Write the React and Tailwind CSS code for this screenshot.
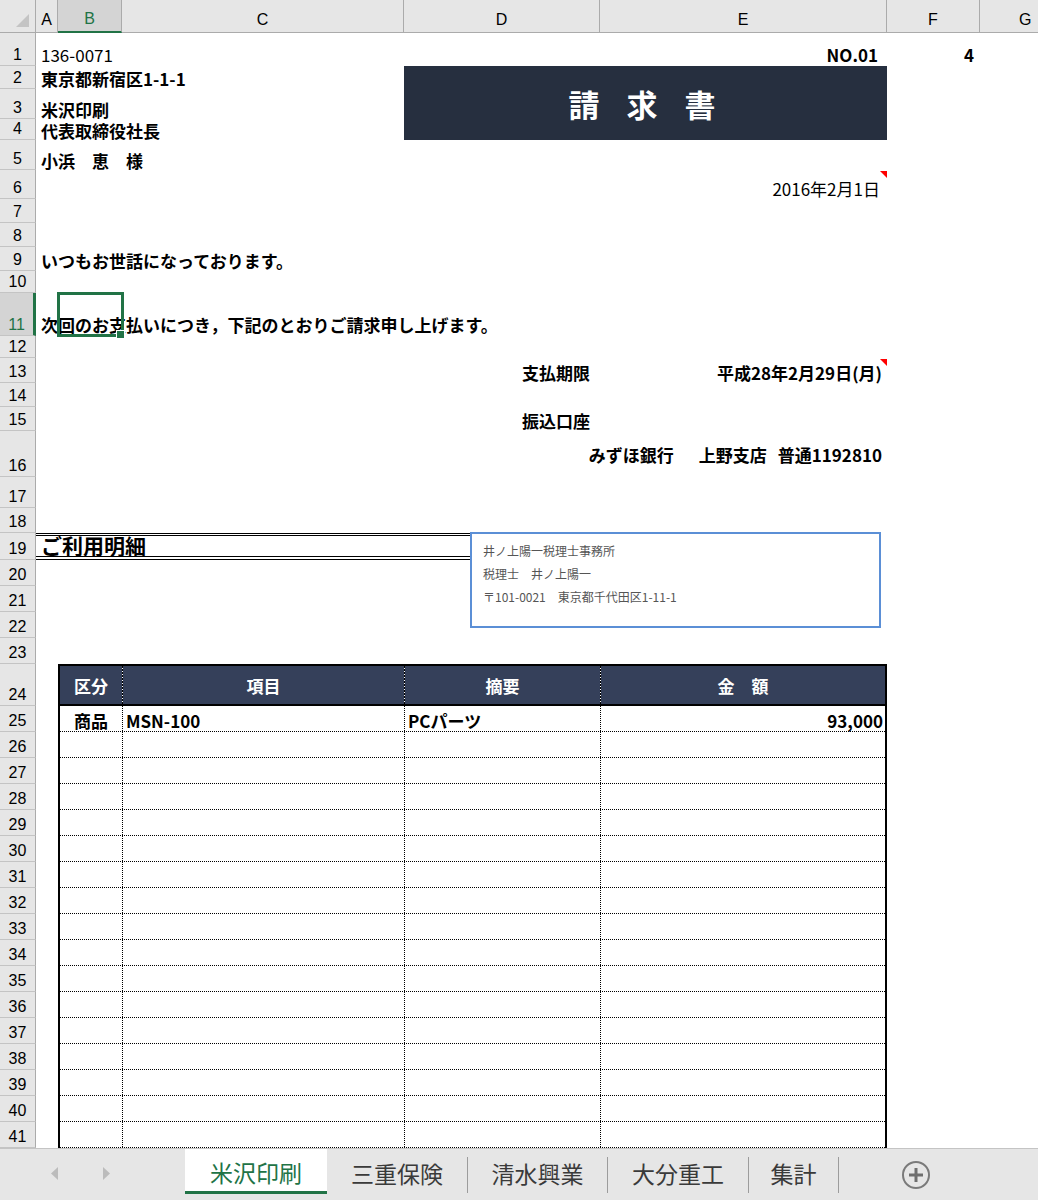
import React from "react";

const JP = "font-['Noto_Sans_CJK_JP',sans-serif]";
const HEAD = "font-['Liberation_Sans','Noto_Sans_CJK_JP',sans-serif]";

const rowNums = Array.from({ length: 41 }, (_, i) => i + 1);
const bodyRows = Array.from({ length: 16 }, (_, i) => i);

const Corner = ({ className }) => (
  <svg width="7" height="7" className={className}>
    <polygon points="0,0 7,0 7,7" fill="#ff0000" />
  </svg>
);

export default function App() {
  return (
    <div className={`w-[1038px] h-[1200px] overflow-hidden bg-white flex flex-col text-black ${JP}`}>
      {/* sheet */}
      <div className="relative h-[1148px] shrink-0 overflow-hidden grid grid-cols-[36px_22px_64px_282px_196px_287px_93px_58px] grid-rows-[33px_33px_23px_30px_21px_30px_29px_24px_24px_24px_22px_43px_22px_25px_24px_24px_46px_31px_25px_27px_26px_26px_26px_26px_42px_repeat(17,26px)] text-[17px] leading-[17px] font-bold">
        {/* column headers */}
        <div className="col-start-1 row-start-1 bg-[#e6e6e6] border-r border-b border-[#ababab] flex items-end justify-end pr-[6px] pb-[5px]">
          <svg width="13" height="13">
            <polygon points="13,0 13,13 0,13" fill="#c4c4c4" />
          </svg>
        </div>
        <div className={`col-start-2 row-start-1 bg-[#e6e6e6] border-r border-b border-[#ababab] flex items-center justify-center pt-[6px] text-[16px] font-normal ${HEAD}`}>A</div>
        <div className={`col-start-3 row-start-1 bg-[#d4d4d4] border-r border-[#ababab] border-b-2 border-b-[#217346] flex items-center justify-center pt-[6px] text-[16px] font-normal text-[#217346] ${HEAD}`}>B</div>
        <div className={`col-start-4 row-start-1 bg-[#e6e6e6] border-r border-b border-[#ababab] flex items-center justify-center pt-[6px] text-[16px] font-normal ${HEAD}`}>C</div>
        <div className={`col-start-5 row-start-1 bg-[#e6e6e6] border-r border-b border-[#ababab] flex items-center justify-center pt-[6px] text-[16px] font-normal ${HEAD}`}>D</div>
        <div className={`col-start-6 row-start-1 bg-[#e6e6e6] border-r border-b border-[#ababab] flex items-center justify-center pt-[6px] text-[16px] font-normal ${HEAD}`}>E</div>
        <div className={`col-start-7 row-start-1 bg-[#e6e6e6] border-r border-b border-[#ababab] flex items-center justify-center pt-[6px] text-[16px] font-normal ${HEAD}`}>F</div>
        <div className={`col-start-8 row-start-1 bg-[#e6e6e6] border-b border-[#ababab] flex items-center pl-[39px] pt-[6px] text-[16px] font-normal ${HEAD}`}>G</div>

        {/* row headers */}
        {rowNums.map((n) => (
          <div
            key={n}
            style={{ gridRow: n + 1 }}
            className={`col-start-1 flex items-end justify-center pb-[2px] leading-[16px] text-[16px] font-normal border-b border-[#c4c4c4] ${HEAD} ${
              n === 11
                ? "bg-[#d4d4d4] text-[#217346] border-r-[3px] border-r-[#217346]"
                : "bg-[#e6e6e6] border-r border-r-[#ababab]"
            }`}
          >
            {n}
          </div>
        ))}

        {/* address block */}
        <div className="col-start-2 col-span-4 row-start-2 flex items-end pl-[5px] pb-[3px] whitespace-nowrap font-normal">136-0071</div>
        <div className="col-start-6 row-start-2 flex items-end justify-end pr-[9px] pb-[3px]">NO.01</div>
        <div className="col-start-7 row-start-2 flex items-end justify-end pr-[6px] pb-[3px]">4</div>
        <div className="col-start-2 col-span-4 row-start-3 flex items-end pl-[5px] pb-[2px] whitespace-nowrap">東京都新宿区1-1-1</div>
        <div className="col-start-2 col-span-4 row-start-4 flex items-end pl-[5px] pb-[1px] whitespace-nowrap">米沢印刷</div>
        <div className="col-start-2 col-span-4 row-start-5 flex items-end pl-[5px] pb-[1px] whitespace-nowrap">代表取締役社長</div>
        <div className="col-start-2 col-span-4 row-start-6 flex items-end pl-[5px] pb-[1px] whitespace-nowrap">小浜　恵　様</div>

        {/* title banner */}
        <div className="col-start-5 col-span-2 row-start-3 row-span-3 bg-[#262f3f] flex items-center justify-center pl-[20px] text-white text-[31px] leading-[31px] tracking-[27px]">
          請求書
        </div>

        <div className="col-start-6 row-start-7 flex items-end justify-end pr-[7px] pb-[2px] whitespace-nowrap font-normal">2016年2月1日</div>

        <div className="col-start-2 col-span-6 row-start-10 flex items-end pl-[5px] pb-[2px] whitespace-nowrap">いつもお世話になっております。</div>
        <div className="col-start-2 col-span-6 row-start-12 flex items-end pl-[5px] pb-[3px] whitespace-nowrap">次回のお支払いにつき，下記のとおりご請求申し上げます。</div>

        {/* payment */}
        <div className="col-start-5 row-start-14 flex items-end pl-[118px] pb-[2px] whitespace-nowrap">支払期限</div>
        <div className="col-start-6 row-start-14 flex items-end justify-end pr-[5px] pb-[2px] whitespace-nowrap">平成28年2月29日(月)</div>
        <div className="col-start-5 row-start-16 flex items-end pl-[118px] pb-[2px] whitespace-nowrap">振込口座</div>
        <div className="col-start-5 col-span-2 row-start-17 flex items-center justify-end pr-[5px] whitespace-nowrap">
          <span>みずほ銀行</span>
          <span className="w-[25px]" />
          <span>上野支店</span>
          <span className="w-[11px]" />
          <span>普通1192810</span>
        </div>

        {/* section heading */}
        <div className="col-start-2 col-span-4 row-start-20 border-t-[3px] border-b-[4px] border-double border-black flex items-end pl-[5px] pb-[1px] leading-[20px] text-[21px] whitespace-nowrap">
          ご利用明細
        </div>

        {/* detail table */}
        <div className="col-start-3 col-span-4 row-start-25 row-span-18 border-x-2 border-t-2 border-black flex flex-col">
          <div className="h-[40px] shrink-0 grid grid-cols-[62px_1px_281px_1px_195px_1px_1fr] bg-[#35405a] border-b-2 border-black text-white">
            <div className="flex items-center justify-center">区分</div>
            <div className="bg-[repeating-linear-gradient(to_bottom,#000_0_2px,#fff_2px_3px)]" />
            <div className="flex items-center justify-center">項目</div>
            <div className="bg-[repeating-linear-gradient(to_bottom,#000_0_2px,#fff_2px_3px)]" />
            <div className="flex items-center justify-center">摘要</div>
            <div className="bg-[repeating-linear-gradient(to_bottom,#000_0_2px,#fff_2px_3px)]" />
            <div className="flex items-center justify-center">金　額</div>
          </div>
          <div className="h-[26px] shrink-0 grid grid-cols-[62px_282px_196px_1fr] border-b border-dotted border-black">
            <div className="flex items-end justify-center pb-[2px]">商品</div>
            <div className="flex items-end pl-[3px] pb-[2px] border-l border-dotted border-black">MSN-100</div>
            <div className="flex items-end pl-[3px] pb-[2px] border-l border-dotted border-black">PCパーツ</div>
            <div className="flex items-end justify-end pr-[2px] pb-[2px] border-l border-dotted border-black">93,000</div>
          </div>
          {bodyRows.map((r) => (
            <div key={r} className="h-[26px] shrink-0 grid grid-cols-[62px_282px_196px_1fr] border-b border-dotted border-black">
              <div />
              <div className="border-l border-dotted border-black" />
              <div className="border-l border-dotted border-black" />
              <div className="border-l border-dotted border-black" />
            </div>
          ))}
        </div>

        {/* comment markers */}
        <Corner className="absolute left-[880px] top-[171px]" />
        <Corner className="absolute left-[880px] top-[359px]" />

        {/* active cell B11 */}
        <div className="absolute left-[57px] top-[292px] w-[67px] h-[45px] border-[3px] border-[#217346]" />
        <div className="absolute left-[116px] top-[330px] w-[9px] h-[9px] bg-[#217346] border border-white" />

        {/* floating text box */}
        <div className="absolute left-[470px] top-[532px] w-[411px] h-[96px] bg-white border-2 border-[#5b8fd6] pl-[11px] pt-[5px] text-[12px] leading-[23px] font-normal text-[#555]">
          <div>井ノ上陽一税理士事務所</div>
          <div>税理士　井ノ上陽一</div>
          <div>〒101-0021　東京都千代田区1-11-1</div>
        </div>
      </div>

      {/* sheet tabs */}
      <div className="flex-1 bg-[#e6e6e6] border-t border-[#c4c4c4] flex items-start text-[23px] leading-[26px] text-[#3a3a3a]">
        <div className="w-[185px] h-[45px] flex items-center gap-[45px] pl-[51px] pt-[3px]">
          <svg width="7" height="13">
            <polygon points="7,0 7,13 0,6.5" fill="#bcbcbc" />
          </svg>
          <svg width="7" height="13">
            <polygon points="0,0 0,13 7,6.5" fill="#bcbcbc" />
          </svg>
        </div>
        <div className="w-[142px] h-[45px] bg-white border-b-[3px] border-[#217346] text-[#217346] flex items-center justify-center pt-[3px]">米沢印刷</div>
        <div className="w-[140px] h-[45px] flex items-center justify-center pt-[3px]">三重保険</div>
        <div className="w-px h-[36px] mt-[8px] bg-[#9c9c9c]" />
        <div className="w-[139px] h-[45px] flex items-center justify-center pt-[3px]">清水興業</div>
        <div className="w-px h-[36px] mt-[8px] bg-[#9c9c9c]" />
        <div className="w-[140px] h-[45px] flex items-center justify-center pt-[3px]">大分重工</div>
        <div className="w-px h-[36px] mt-[8px] bg-[#9c9c9c]" />
        <div className="w-[89px] h-[45px] flex items-center justify-center pt-[3px]">集計</div>
        <div className="w-px h-[36px] mt-[8px] bg-[#9c9c9c]" />
        <div className="w-[154px] h-[45px] flex items-center justify-center pt-[6px]">
          <svg width="30" height="30" viewBox="0 0 30 30">
            <circle cx="15" cy="15" r="13" fill="none" stroke="#7a7a7a" strokeWidth="2" />
            <path d="M15 8v14M8 15h14" stroke="#6e6e6e" strokeWidth="3" />
          </svg>
        </div>
      </div>
    </div>
  );
}
